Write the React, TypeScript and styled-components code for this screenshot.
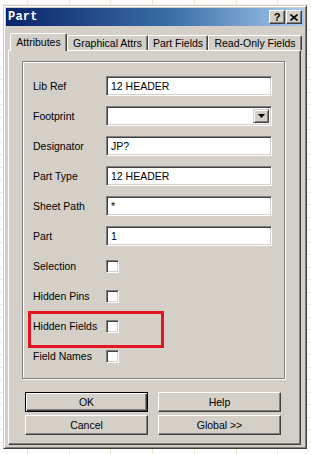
import React from 'react';
import styled, { createGlobalStyle } from 'styled-components';

const GlobalStyle = createGlobalStyle`
  html, body {
    margin: 0;
    padding: 0;
    background: #ffffff;
  }
  body {
    font-family: "Liberation Sans", Arial, sans-serif;
    font-size: 10.5px;
    color: #000;
  }
`;

const face = '#d4d0c8';
const shadow = '#808080';
const darkShadow = '#404040';

const Page = styled.div`
  position: relative;
  width: 311px;
  height: 454px;
  box-sizing: border-box;
  padding: 5px 4px 5px 3px;
  background-color: #fdfdfb;
  background-image:
    repeating-linear-gradient(90deg, transparent 0 27px, #e9e6d2 27px 28px, transparent 28px 41.7px),
    repeating-linear-gradient(0deg, transparent 0 11.5px, #efede0 11.5px 12.5px);
  overflow: hidden;
`;

const Dialog = styled.div`
  width: 304px;
  height: 444px;
  box-sizing: border-box;
  background: ${face};
  border: 1px solid;
  border-color: ${face} ${darkShadow} ${darkShadow} ${face};
  box-shadow: inset 1px 1px 0 #ffffff, inset -1px -1px 0 ${shadow};
  padding: 2px;
  display: flex;
  flex-direction: column;
`;

const TitleBar = styled.div`
  height: 18px;
  display: flex;
  align-items: center;
  padding: 0 2px 0 2px;
  background: linear-gradient(90deg, #0a246a 0%, #3a6ea5 55%, #a6caf0 100%);
`;

const TitleText = styled.div`
  flex: 1;
  color: #ffffff;
  font-family: "Liberation Mono", "DejaVu Sans Mono", monospace;
  font-weight: bold;
  font-size: 12px;
  letter-spacing: 0.2px;
`;

const CaptionButton = styled.div<{ $gap?: number }>`
  width: 14px;
  height: 12px;
  margin-right: ${p => p.$gap ?? 0}px;
  background: ${face};
  border: 1px solid;
  border-color: #ffffff ${darkShadow} ${darkShadow} #ffffff;
  box-shadow: inset -1px -1px 0 ${shadow};
  display: flex;
  align-items: center;
  justify-content: center;
  font-family: "Liberation Sans", Arial, sans-serif;
  font-weight: bold;
  font-size: 11px;
  line-height: 1;
`;

const TabRow = styled.div`
  height: 24px;
  display: flex;
  align-items: flex-end;
  padding-left: 4px;
  position: relative;
  z-index: 1;
`;

const Tab = styled.div<{ $width: number; $active?: boolean }>`
  width: ${p => p.$width}px;
  height: ${p => (p.$active ? 18 : 15)}px;
  margin-bottom: ${p => (p.$active ? -1 : 0)}px;
  box-sizing: border-box;
  background: ${face};
  border-top: 1px solid #ffffff;
  border-left: 1px solid #ffffff;
  border-right: 1px solid ${darkShadow};
  box-shadow: inset -1px 0 0 ${shadow};
  border-radius: 2px 2px 0 0;
  display: flex;
  align-items: ${p => (p.$active ? 'flex-start' : 'center')};
  padding-top: ${p => (p.$active ? 2 : 0)}px;
  justify-content: center;
  font-size: 10.5px;
  white-space: nowrap;
`;

const Panel = styled.div`
  flex: 1;
  margin: 0 3px 1px 2px;
  box-sizing: border-box;
  border: 1px solid;
  border-color: #ffffff ${darkShadow} ${darkShadow} #ffffff;
  box-shadow: inset -1px -1px 0 ${shadow};
  padding: 10px 15px 0 13px;
  display: flex;
  flex-direction: column;
`;

const GroupBox = styled.div`
  height: 318px;
  box-sizing: border-box;
  border: 1px solid ${shadow};
  box-shadow: inset 1px 1px 0 #ffffff, 1px 1px 0 #ffffff;
  padding: 9px 12px 0 10px;
  display: grid;
  grid-template-columns: 73px 166px;
  grid-auto-rows: 30px;
  align-items: center;
`;

const Label = styled.div`
  font-size: 10.5px;
  white-space: nowrap;
`;

const Field = styled.div`
  height: 20px;
  box-sizing: border-box;
  background: #ffffff;
  border: 1px solid;
  border-color: ${shadow} #ffffff #ffffff ${shadow};
  box-shadow: inset 1px 1px 0 ${darkShadow}, inset -1px -1px 0 ${face};
  padding: 0 4px;
  display: flex;
  align-items: center;
  font-size: 10.5px;
  position: relative;
`;

const DropButton = styled.div`
  position: absolute;
  right: 2px;
  top: 2px;
  width: 16px;
  height: 14px;
  box-sizing: border-box;
  background: ${face};
  border: 1px solid;
  border-color: ${face} ${darkShadow} ${darkShadow} ${face};
  box-shadow: inset 1px 1px 0 #ffffff, inset -1px -1px 0 ${shadow};
  display: flex;
  align-items: center;
  justify-content: center;
`;

const Check = styled.div`
  width: 13px;
  height: 13px;
  box-sizing: border-box;
  background: #ffffff;
  border: 1px solid;
  border-color: ${shadow} #ffffff #ffffff ${shadow};
  box-shadow: inset 1px 1px 0 ${darkShadow}, inset -1px -1px 0 ${face};
`;

const Buttons = styled.div`
  margin-top: 13px;
  padding-left: 3px;
  display: grid;
  grid-template-columns: 123px 123px;
  column-gap: 10px;
  row-gap: 3px;
`;

const Button = styled.div<{ $default?: boolean }>`
  height: 20px;
  box-sizing: border-box;
  background: ${face};
  border: 1px solid;
  border-color: ${p => (p.$default ? '#000 #000 #000 #000' : `#ffffff ${darkShadow} ${darkShadow} #ffffff`)};
  box-shadow: ${p =>
    p.$default
      ? `inset 1px 1px 0 #ffffff, inset -1px -1px 0 ${darkShadow}, inset -2px -2px 0 ${shadow}`
      : `inset -1px -1px 0 ${shadow}`};
  display: flex;
  align-items: center;
  justify-content: center;
  font-size: 10.5px;
`;

const Highlight = styled.div`
  position: absolute;
  left: 28px;
  top: 311px;
  width: 136px;
  height: 37px;
  box-sizing: border-box;
  border: 3px solid #e0161e;
`;

const textRows: [string, string][] = [
  ['Lib Ref', '12 HEADER'],
];

const moreRows: [string, string][] = [
  ['Designator', 'JP?'],
  ['Part Type', '12 HEADER'],
  ['Sheet Path', '*'],
  ['Part', '1'],
];

const checkRows = ['Selection', 'Hidden Pins', 'Hidden Fields', 'Field Names'];

export default function App() {
  return (
    <Page>
      <GlobalStyle />
      <Dialog>
        <TitleBar>
          <TitleText>Part</TitleText>
          <CaptionButton $gap={1}>?</CaptionButton>
          <CaptionButton>
            <svg width="8" height="7" viewBox="0 0 8 7">
              <path d="M0.5 0.5 L7.5 6.5 M7.5 0.5 L0.5 6.5" stroke="#000" strokeWidth="1.6" />
            </svg>
          </CaptionButton>
        </TitleBar>
        <TabRow>
          <Tab $width={57} $active>Attributes</Tab>
          <Tab $width={81}>Graphical Attrs</Tab>
          <Tab $width={60}>Part Fields</Tab>
          <Tab $width={94}>Read-Only Fields</Tab>
        </TabRow>
        <Panel>
          <GroupBox>
            {textRows.map(([label, value]) => (
              <React.Fragment key={label}>
                <Label>{label}</Label>
                <Field>{value}</Field>
              </React.Fragment>
            ))}
            <Label>Footprint</Label>
            <Field>
              <DropButton>
                <svg width="7" height="4" viewBox="0 0 7 4">
                  <path d="M0 0 H7 L3.5 4 Z" fill="#000" />
                </svg>
              </DropButton>
            </Field>
            {moreRows.map(([label, value]) => (
              <React.Fragment key={label}>
                <Label>{label}</Label>
                <Field>{value}</Field>
              </React.Fragment>
            ))}
            {checkRows.map(label => (
              <React.Fragment key={label}>
                <Label>{label}</Label>
                <Check />
              </React.Fragment>
            ))}
          </GroupBox>
          <Buttons>
            <Button $default>OK</Button>
            <Button>Help</Button>
            <Button>Cancel</Button>
            <Button>Global &gt;&gt;</Button>
          </Buttons>
        </Panel>
      </Dialog>
      <Highlight />
    </Page>
  );
}
